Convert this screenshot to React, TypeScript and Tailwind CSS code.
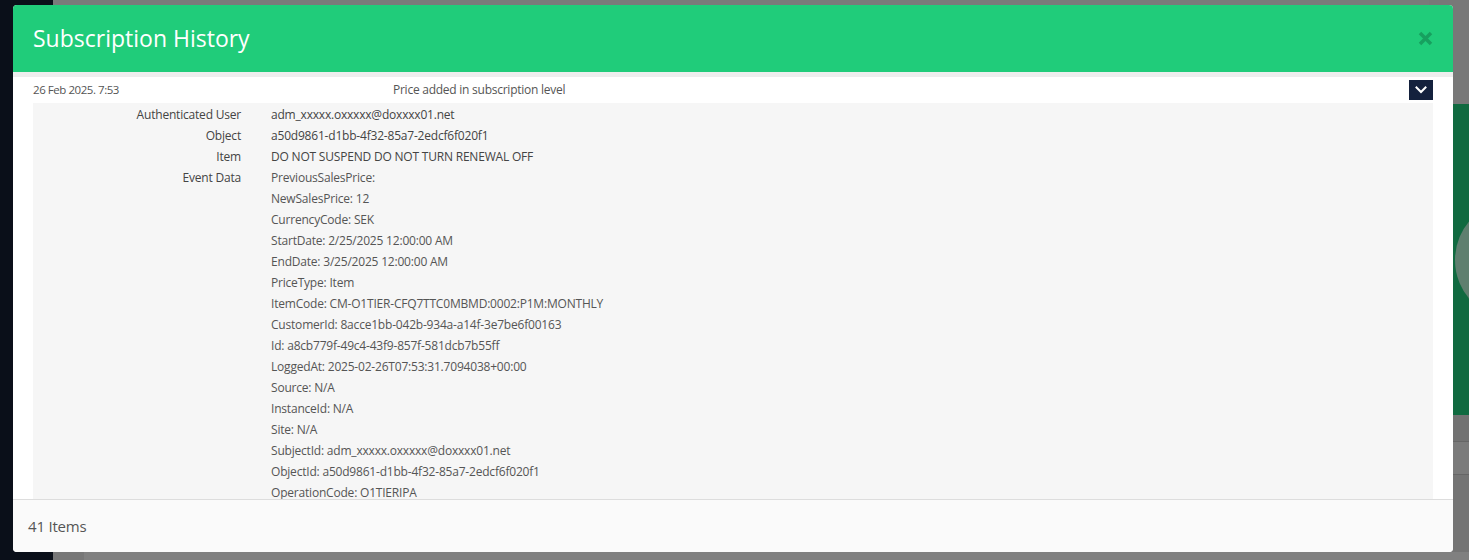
import React from 'react'

const details: { label: string; value: string }[] = [
  { label: 'Authenticated User', value: 'adm_xxxxx.oxxxxx@doxxxx01.net' },
  { label: 'Object', value: 'a50d9861-d1bb-4f32-85a7-2edcf6f020f1' },
  { label: 'Item', value: 'DO NOT SUSPEND DO NOT TURN RENEWAL OFF' },
]

const eventData = [
  'PreviousSalesPrice:',
  'NewSalesPrice: 12',
  'CurrencyCode: SEK',
  'StartDate: 2/25/2025 12:00:00 AM',
  'EndDate: 3/25/2025 12:00:00 AM',
  'PriceType: Item',
  'ItemCode: CM-O1TIER-CFQ7TTC0MBMD:0002:P1M:MONTHLY',
  'CustomerId: 8acce1bb-042b-934a-a14f-3e7be6f00163',
  'Id: a8cb779f-49c4-43f9-857f-581dcb7b55ff',
  'LoggedAt: 2025-02-26T07:53:31.7094038+00:00',
  'Source: N/A',
  'InstanceId: N/A',
  'Site: N/A',
  'SubjectId: adm_xxxxx.oxxxxx@doxxxx01.net',
  'ObjectId: a50d9861-d1bb-4f32-85a7-2edcf6f020f1',
  'OperationCode: O1TIERIPA',
]

function Backdrop() {
  return (
    <div className="flex h-[560px] w-full">
      <div className="w-[53px] bg-[#0a0f19]" />
      <div className="flex flex-1 flex-col bg-[#7a7a7a]">
        <div className="flex flex-1 justify-end">
          <div className="flex w-[40px] flex-col">
            <div className="h-[104px] bg-[#787878]" />
            <div className="flex h-[311px] items-center overflow-hidden bg-[#106a40]">
              <div className="ml-[26px] h-[120px] w-[120px] shrink-0 rounded-full bg-[#5f7f6f]" />
            </div>
            <div className="h-[27px] border-b border-[#666] bg-[#727272]" />
            <div className="h-[33px] border-b border-[#666] bg-[#7b7b7b]" />
            <div className="flex-1 bg-[#747474]" />
          </div>
        </div>
        <div className="flex h-[8px]">
          <div className="w-[31px] bg-[#777]" />
          <div className="flex-1 bg-[#808080]" />
        </div>
      </div>
    </div>
  )
}

function Chevron() {
  return (
    <svg width="12" height="8" viewBox="0 0 12 8" fill="none">
      <path d="M1.5 1.5 L6 6 L10.5 1.5" stroke="white" strokeWidth="2" strokeLinecap="square" />
    </svg>
  )
}

export default function App() {
  return (
    <div className="relative h-[560px] w-[1469px] overflow-hidden font-['Open_Sans',sans-serif]">
      <Backdrop />

      {/* Modal */}
      <div className="absolute left-[13px] top-[5px] flex h-[547px] w-[1440px] flex-col overflow-hidden rounded-[4px] bg-white">
        <div className="flex h-[67px] shrink-0 items-center justify-between bg-[#20cc7a] px-[20px]">
          <h2 className="text-[23px] font-normal text-white">Subscription History</h2>
          <svg width="15" height="15" viewBox="0 0 15 15">
            <path d="M2 2 L13 13 M13 2 L2 13" stroke="#17a05f" strokeWidth="3.5" />
          </svg>
        </div>

        <div className="flex-1 overflow-hidden">
          <div className="h-[5px] bg-[#eeeeee]" />
          <div className="flex h-[26px] items-center px-[20px] text-[12px] tracking-[-0.25px] text-[#555]">
            <div className="w-[360px] text-[11.5px] tracking-[-0.45px]">26 Feb 2025. 7:53</div>
            <div className="flex-1">Price added in subscription level</div>
            <button className="flex h-[20px] w-[24px] items-center justify-center bg-[#14213d]">
              <Chevron />
            </button>
          </div>
          <div className="mx-[20px] bg-[#f6f6f6] pt-px text-[12px] leading-[21px] tracking-[-0.2px] text-[#444]">
            <div className="grid grid-cols-[208px_1fr] gap-x-[30px]">
              {details.map((d) => (
                <React.Fragment key={d.label}>
                  <div className="text-right">{d.label}</div>
                  <div>{d.value}</div>
                </React.Fragment>
              ))}
              <div className="text-right">Event Data</div>
              <div className="text-[#555]">
                {eventData.map((line) => (
                  <div key={line}>{line}</div>
                ))}
              </div>
            </div>
          </div>
        </div>

        <div className="flex h-[53px] shrink-0 items-center border-t border-[#dddddd] bg-[#fafafa] px-[15px] text-[15px] tracking-[-0.2px] text-[#555]">
          41 Items
        </div>
      </div>
    </div>
  )
}
